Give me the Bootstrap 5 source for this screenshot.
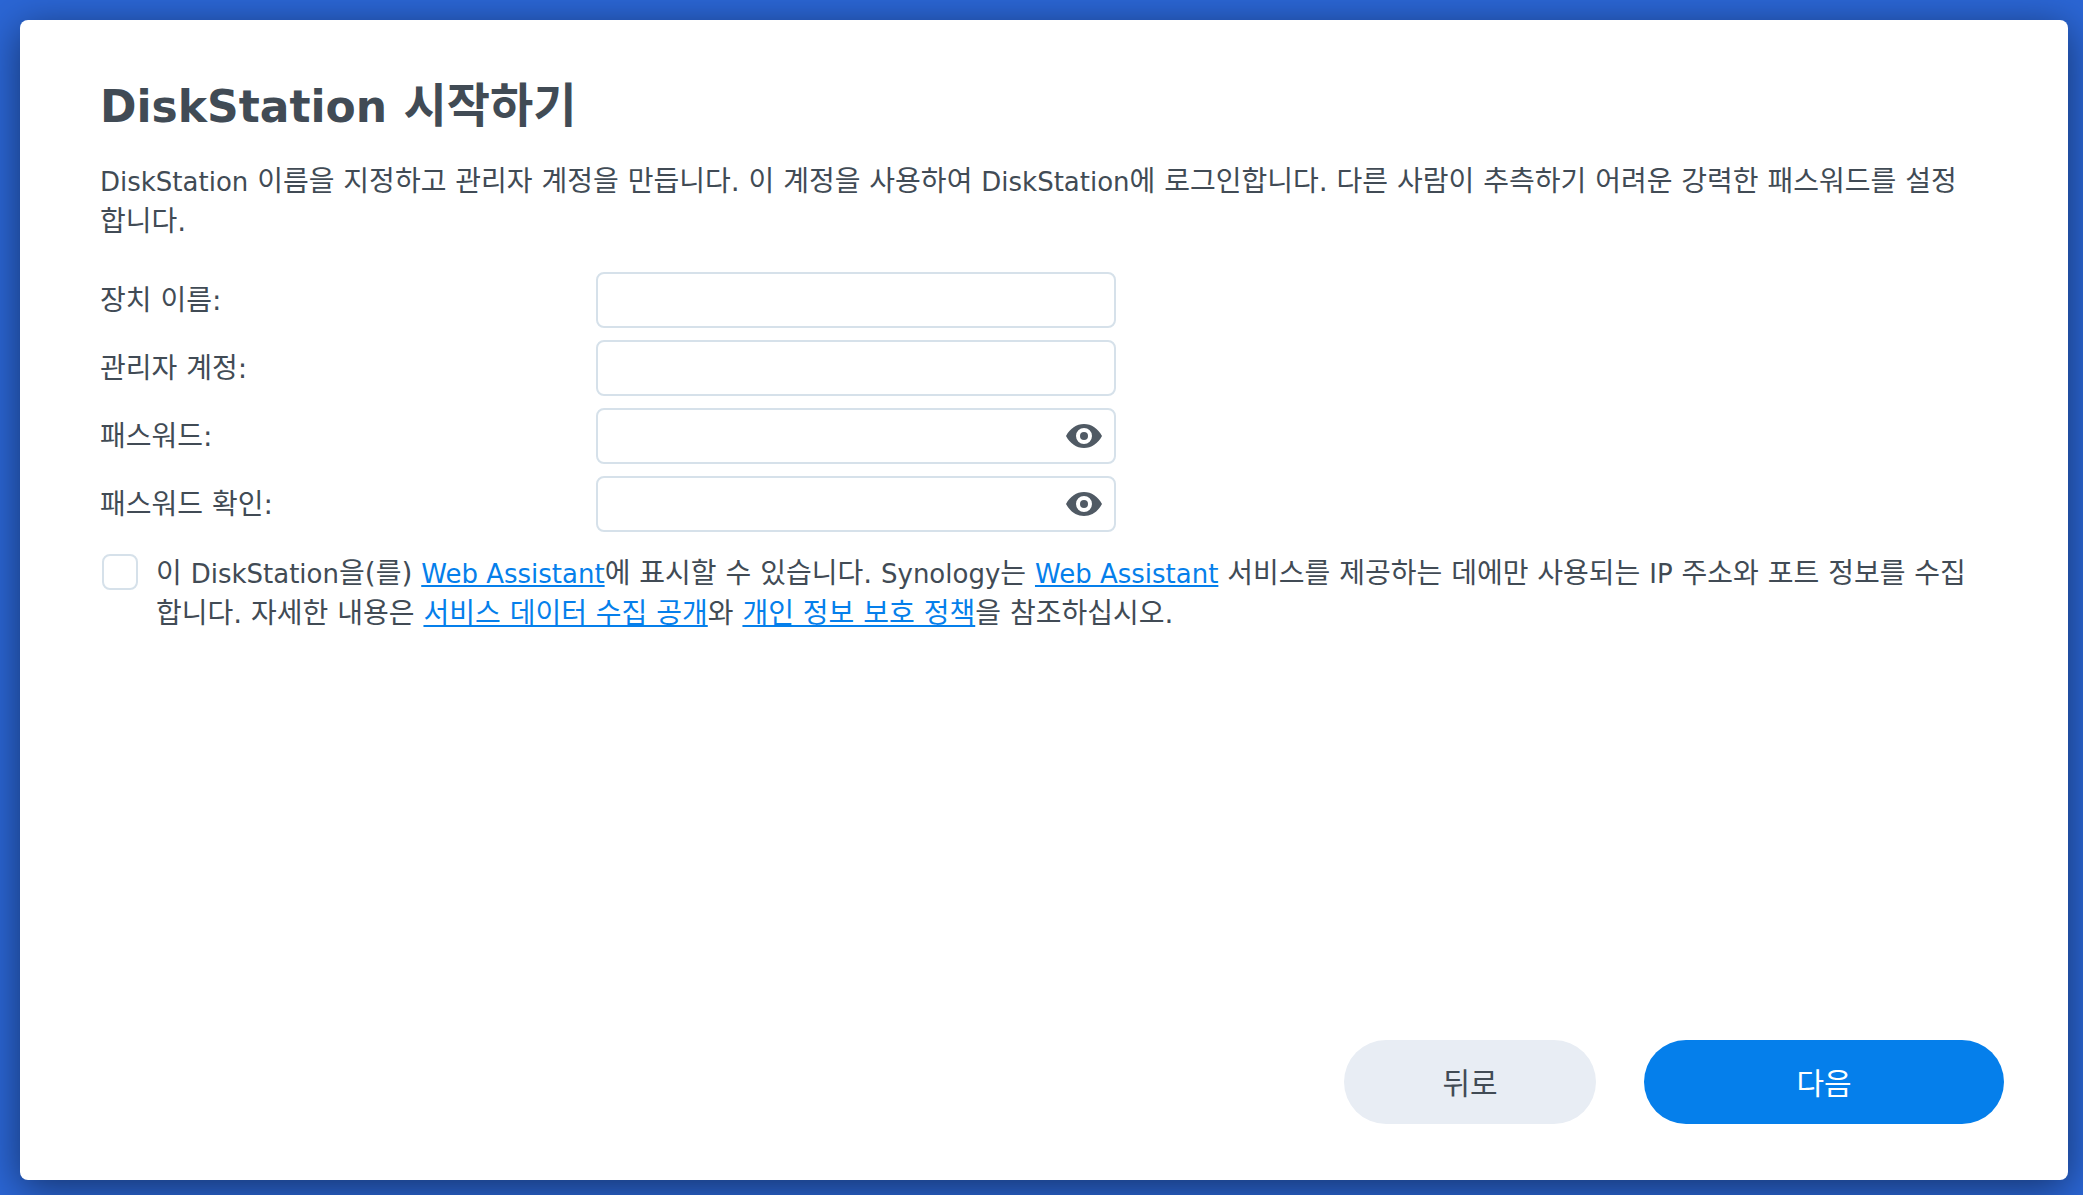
<!DOCTYPE html>
<html lang="ko">
<head>
<meta charset="utf-8">
<meta name="viewport" content="width=device-width, initial-scale=1">
<title>DiskStation 시작하기</title>
<link href="https://cdn.jsdelivr.net/npm/bootstrap@5.3.0/dist/css/bootstrap.min.css" rel="stylesheet">
<style>
  body {
    background: #2b66d5;
    color: #414b55;
    font-family: "DejaVu Sans", "Noto Sans CJK KR", sans-serif;
    font-size: 28px;
    line-height: 40px;
    padding: 20px 15px 15px 20px;
  }
  .wizard {
    border-radius: 8px;
    box-shadow: 0 8px 40px rgba(0, 0, 0, .5);
    padding: 58px 64px 56px 80px;
  }
  .wizard-body { padding-right: 28px; }
  .wizard-title { font-size: 47px; line-height: 56px; font-weight: 700; margin-bottom: 28px; }
  /* Latin words are set a little smaller than the Hangul around them */
  .latin { font-size: 26px; line-height: 1; }
  .wizard-title .latin { font-size: 44px; }
  .intro { margin-bottom: 30px; }
  .fields { display: grid; gap: 12px; }
  .field { display: grid; grid-template-columns: 496px minmax(0, 520px); align-items: center; }
  .field label { padding-top: 2px; }
  .field .form-control {
    height: 56px;
    border: 2px solid #d6e1ea;
    border-radius: 8px;
    font-size: 26px;
    padding: 6px 16px;
  }
  .field .has-eye { padding-right: 64px; }
  .eye-btn { right: 14px; color: #505a64; line-height: 0; }
  .agree { margin-top: 22px; gap: 18px; }
  .agree .form-check-input {
    width: 36px;
    height: 36px;
    border: 2px solid #d6e1ea;
    border-radius: 8px;
    margin: 0 0 0 2px;
  }
  .agree a { color: #057feb; text-decoration-thickness: 2px; text-underline-offset: 2px; }
  .actions { gap: 48px; }
  .actions .btn { height: 84px; border: 0; font-size: 30px; padding: 8px 16px 6px; }
  .btn-back { width: 252px; background: #e8edf4; color: #414b55; }
  .btn-next { width: 360px; background: #057feb; color: #fff; }
</style>
</head>
<body class="min-vh-100 d-flex">
<main class="wizard bg-white flex-grow-1">
  <form class="d-flex flex-column h-100">
    <div class="wizard-body">
      <h1 class="wizard-title"><span class="latin">DiskStation</span> 시작하기</h1>
      <p class="intro"><span class="latin">DiskStation</span> 이름을 지정하고 관리자 계정을 만듭니다. 이 계정을 사용하여 <span class="latin">DiskStation</span>에 로그인합니다. 다른 사람이 추측하기 어려운 강력한 패스워드를 설정합니다.</p>
      <div class="fields">
        <div class="field">
          <label for="device">장치 이름:</label>
          <input class="form-control" id="device" type="text">
        </div>
        <div class="field">
          <label for="account">관리자 계정:</label>
          <input class="form-control" id="account" type="text">
        </div>
        <div class="field">
          <label for="pw">패스워드:</label>
          <div class="position-relative">
            <input class="form-control has-eye" id="pw" type="password">
            <button class="eye-btn btn p-0 border-0 position-absolute top-50 translate-middle-y" type="button" aria-label="패스워드 표시">
              <svg width="36" height="24" viewBox="0 0 36 24" fill="currentColor" fill-rule="evenodd"><path d="M0 12C4 4.500 10.500 0 18 0s14 4.500 18 12c-4 7.500-10.500 12-18 12S4 19.500 0 12zM18 4a8 8 0 1 0 0 16 8 8 0 0 0 0-16z"/><circle cx="18" cy="12" r="4"/></svg>
            </button>
          </div>
        </div>
        <div class="field">
          <label for="pw2">패스워드 확인:</label>
          <div class="position-relative">
            <input class="form-control has-eye" id="pw2" type="password">
            <button class="eye-btn btn p-0 border-0 position-absolute top-50 translate-middle-y" type="button" aria-label="패스워드 표시">
              <svg width="36" height="24" viewBox="0 0 36 24" fill="currentColor" fill-rule="evenodd"><path d="M0 12C4 4.500 10.500 0 18 0s14 4.500 18 12c-4 7.500-10.500 12-18 12S4 19.500 0 12zM18 4a8 8 0 1 0 0 16 8 8 0 0 0 0-16z"/><circle cx="18" cy="12" r="4"/></svg>
            </button>
          </div>
        </div>
      </div>
      <div class="agree d-flex align-items-start">
        <input class="form-check-input flex-shrink-0" id="agree" type="checkbox">
        <label for="agree">이 <span class="latin">DiskStation</span>을(를) <a href="#" class="latin">Web Assistant</a>에 표시할 수 있습니다. <span class="latin">Synology</span>는 <a href="#" class="latin">Web Assistant</a> 서비스를 제공하는 데에만 사용되는 <span class="latin">IP</span> 주소와 포트 정보를 수집합니다. 자세한 내용은 <a href="#">서비스 데이터 수집 공개</a>와 <a href="#">개인 정보 보호 정책</a>을 참조하십시오.</label>
      </div>
    </div>
    <div class="actions d-flex justify-content-end mt-auto">
      <button type="button" class="btn btn-back rounded-pill">뒤로</button>
      <button type="submit" class="btn btn-next rounded-pill">다음</button>
    </div>
  </form>
</main>
<script src="https://cdn.jsdelivr.net/npm/bootstrap@5.3.0/dist/js/bootstrap.bundle.min.js"></script>
</body>
</html>
